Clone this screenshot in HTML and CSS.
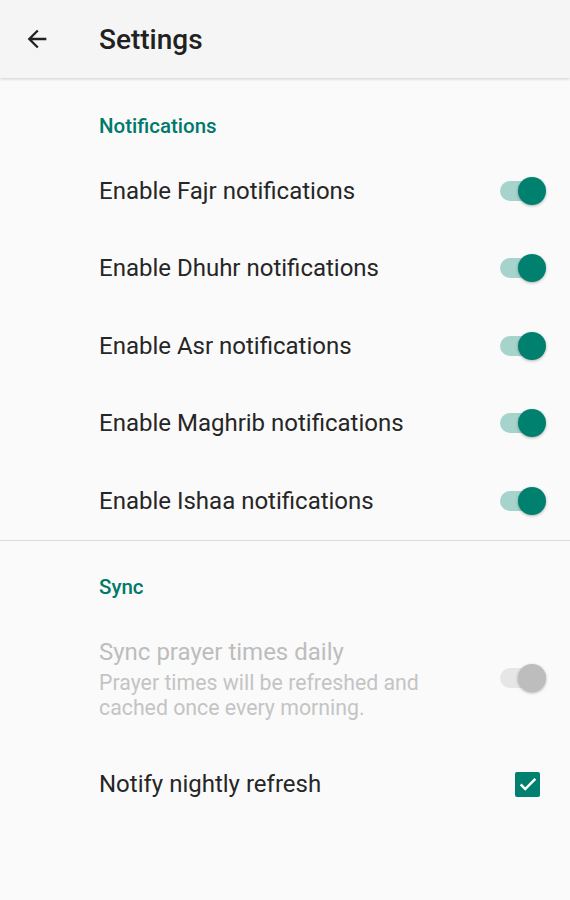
FILE: index.html
```html
<!DOCTYPE html>
<html lang="en">
<head>
  <meta charset="UTF-8" />
  <meta name="viewport" content="width=device-width, initial-scale=1.0"/>
  <title>Settings</title>
  <link rel="stylesheet" href="styles.css">
</head>
<body>
  <header class="toolbar">
    <button class="back-btn" aria-label="Back">
      <svg viewBox="0 0 24 24" width="24" height="24">
        <path d="M20 11H7.83l5.59-5.59L12 4l-8 8 8 8 1.41-1.41L7.83 13H20v-2z" fill="#212121"/>
      </svg>
    </button>
    <h1 class="toolbar-title">Settings</h1>
  </header>

  <main class="prefs">
    <section class="pref-group">
      <h2 class="group-title">Notifications</h2>
      <div class="pref-row">
        <span class="pref-title">Enable Fajr notifications</span>
        <span class="switch on"><span class="thumb"></span></span>
      </div>
      <div class="pref-row">
        <span class="pref-title">Enable Dhuhr notifications</span>
        <span class="switch on"><span class="thumb"></span></span>
      </div>
      <div class="pref-row">
        <span class="pref-title">Enable Asr notifications</span>
        <span class="switch on"><span class="thumb"></span></span>
      </div>
      <div class="pref-row">
        <span class="pref-title">Enable Maghrib notifications</span>
        <span class="switch on"><span class="thumb"></span></span>
      </div>
      <div class="pref-row">
        <span class="pref-title">Enable Ishaa notifications</span>
        <span class="switch on"><span class="thumb"></span></span>
      </div>
    </section>

    <section class="pref-group sync">
      <h2 class="group-title">Sync</h2>
      <div class="pref-row disabled">
        <div class="pref-text">
          <span class="pref-title">Sync prayer times daily</span>
          <span class="pref-summary">Prayer times will be refreshed and cached once every morning.</span>
        </div>
        <span class="switch off"><span class="thumb"></span></span>
      </div>
      <div class="pref-row">
        <span class="pref-title">Notify nightly refresh</span>
        <span class="checkbox">
          <svg viewBox="0 0 24 24" width="22" height="22">
            <path d="M4 12.5l5 5L20 6.5" fill="none" stroke="#fff" stroke-width="2.8"/>
          </svg>
        </span>
      </div>
    </section>
  </main>
</body>
</html>
```

FILE: styles.css
```css
body {
  margin: 0;
  padding: 0;
  font-family: Roboto, "Noto Sans", sans-serif;
  background: #fafafa;
  color: #212121;
  min-height: 100vh;
}
.toolbar {
  height: 78px;
  display: flex;
  align-items: center;
  background: #f5f5f5;
  box-shadow: 0 1px 3px rgba(0,0,0,0.18);
  position: relative;
  z-index: 1;
}
.back-btn {
  width: 50px;
  height: 50px;
  margin-left: 12px;
  border: none;
  background: none;
  padding: 0;
  display: flex;
  align-items: center;
  justify-content: center;
}
.back-btn svg {
  width: 28px;
  height: 28px;
}
.toolbar-title {
  margin: 0 0 0 37px;
  font-size: 28px;
  font-weight: 500;
  color: #212121;
}
.pref-group {
  padding: 30px 0 0;
}
.pref-group > .group-title {
  margin-bottom: 8px;
}
.pref-group + .pref-group {
  border-top: 1px solid #dcdcdc;
  padding-top: 28px;
}
.sync > .group-title {
  margin-bottom: 0;
}
.group-title {
  margin: 0 0 0 99px;
  font-size: 20.5px;
  font-weight: 500;
  color: #00796b;
  line-height: 36px;
}
.pref-row {
  display: flex;
  align-items: center;
  justify-content: space-between;
  min-height: 77.5px;
  padding: 0 25px 0 99px;
}
.pref-title {
  font-size: 24px;
  color: #262626;
  line-height: 28px;
}
.pref-text {
  display: flex;
  flex-direction: column;
  padding: 33px 0 26px;
}
.pref-summary {
  margin-top: 4px;
  font-size: 21.3px;
  line-height: 25px;
  width: 340px;
}
.disabled .pref-title {
  color: #bdbdbd;
}
.disabled .pref-summary {
  color: #c4c4c4;
}
.disabled .switch {
  margin-top: 5px;
}
.switch {
  position: relative;
  width: 40px;
  height: 20px;
  border-radius: 10px;
  margin-right: 5px;
}
.switch .thumb {
  position: absolute;
  top: -4px;
  right: -6px;
  width: 28px;
  height: 28px;
  border-radius: 50%;
  box-shadow: 0 1px 3px rgba(0,0,0,0.3);
}
.switch.on {
  background: #a6d3cc;
}
.switch.on .thumb {
  background: #00806f;
}
.switch.off {
  background: #e6e6e6;
}
.switch.off .thumb {
  background: #bdbdbd;
}
.checkbox {
  width: 25px;
  height: 25px;
  border-radius: 2px;
  background: #00806f;
  display: flex;
  align-items: center;
  justify-content: center;
  margin-right: 5px;
}
```
